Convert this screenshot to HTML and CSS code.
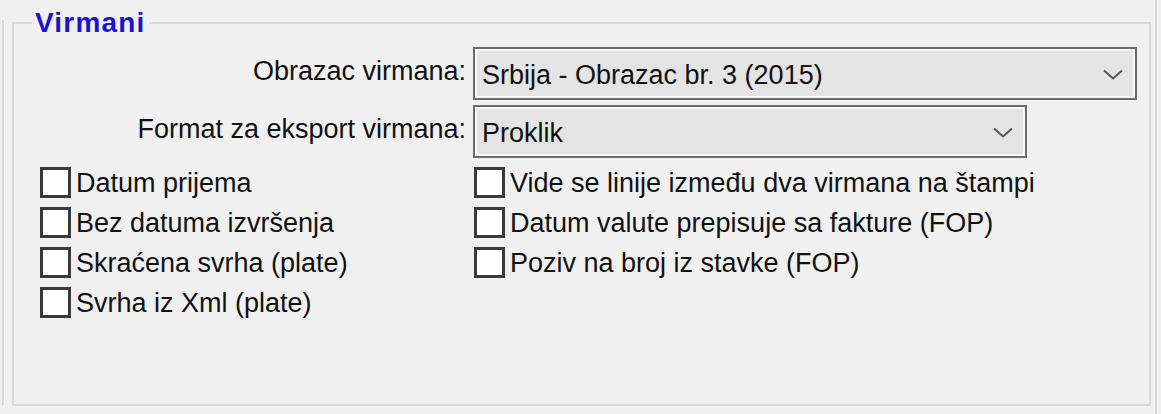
FILE: index.html
```html
<!DOCTYPE html>
<html lang="sr">
<head>
<meta charset="utf-8">
<title>Virmani</title>
<link rel="stylesheet" href="styles.css">
</head>
<body>
<div class="page">
  <div class="edge-left"></div>
  <fieldset class="group">
    <legend class="group-title">Virmani</legend>
    <div class="fields">
      <label class="field-label">Obrazac virmana:</label>
      <div class="combo combo-wide">
        <span class="combo-text">Srbija - Obrazac br. 3 (2015)</span>
        <svg class="chevron" width="20" height="11" viewBox="0 0 20 11"><polyline points="1,1.5 10,9.5 19,1.5" fill="none" stroke="#555" stroke-width="2"/></svg>
      </div>
      <label class="field-label">Format za eksport virmana:</label>
      <div class="combo combo-narrow">
        <span class="combo-text">Proklik</span>
        <svg class="chevron" width="20" height="11" viewBox="0 0 20 11"><polyline points="1,1.5 10,9.5 19,1.5" fill="none" stroke="#555" stroke-width="2"/></svg>
      </div>
    </div>
    <div class="checks">
      <label class="check"><span class="box"></span><span class="check-text">Datum prijema</span></label>
      <label class="check"><span class="box"></span><span class="check-text">Vide se linije između dva virmana na štampi</span></label>
      <label class="check"><span class="box"></span><span class="check-text">Bez datuma izvršenja</span></label>
      <label class="check"><span class="box"></span><span class="check-text">Datum valute prepisuje sa fakture (FOP)</span></label>
      <label class="check"><span class="box"></span><span class="check-text">Skraćena svrha (plate)</span></label>
      <label class="check"><span class="box"></span><span class="check-text">Poziv na broj iz stavke (FOP)</span></label>
      <label class="check"><span class="box"></span><span class="check-text">Svrha iz Xml (plate)</span></label>
    </div>
  </fieldset>
  <div class="edge-right"></div>
</div>
</body>
</html>
```

FILE: styles.css
```css
html, body {
  margin: 0;
  padding: 0;
  background: #f0f0f0;
}
body {
  font-family: "Liberation Sans", Arial, sans-serif;
  font-size: 27px;
  color: #111;
}
.page {
  display: flex;
  align-items: flex-start;
  width: 1161px;
  height: 414px;
  overflow: hidden;
}
.edge-left {
  margin-left: 2px;
  margin-top: 20px;
  width: 2px;
  height: 385px;
  background: #d6d6d6;
  border-right: 1px solid #fafafa;
}
.edge-right {
  margin-left: 3px;
  width: 2px;
  height: 414px;
  background: #d6d6d6;
  border-left: 1px solid #fafafa;
  border-right: 1px solid #fafafa;
}
.group {
  box-sizing: border-box;
  margin: 10px 0 0 7px;
  width: 1139px;
  height: 396px;
  padding: 0 0 0 26px;
  border: 2px solid #d8d8d8;
  min-width: 0;
}
.group-title {
  margin-left: -8px;
  padding: 0 3px;
  font-weight: bold;
  font-size: 28px;
  line-height: 26px;
  letter-spacing: 1.2px;
  color: #1a14d2;
}
.fields {
  margin-top: 11px;
  display: grid;
  grid-template-columns: 426px auto;
  column-gap: 7px;
  row-gap: 5px;
  align-items: center;
  justify-items: start;
}
.field-label {
  justify-self: end;
  padding-bottom: 4px;
}
.combo {
  box-sizing: border-box;
  height: 53px;
  display: flex;
  align-items: center;
  justify-content: space-between;
  padding: 0 12px 0 7px;
  border: 2px solid #6c6c6c;
  box-shadow: inset 0 0 0 2px #f7f7f7;
  background: #e4e4e4;
}
.combo-wide { width: 664px; }
.combo-narrow { width: 554px; }
.combo-text {
  padding-top: 3px;
  white-space: nowrap;
}
.chevron {
  display: block;
  margin-top: 1px;
}
.checks {
  margin-top: 9px;
  display: grid;
  grid-template-columns: 434px auto;
  row-gap: 9px;
}
.check {
  display: flex;
  align-items: center;
  gap: 5px;
  height: 31px;
}
.box {
  box-sizing: border-box;
  flex: none;
  width: 31px;
  height: 31px;
  border: 3px solid #3a3a3a;
  background: #fff;
}
.check-text {
  padding-top: 2px;
  white-space: nowrap;
}
```
